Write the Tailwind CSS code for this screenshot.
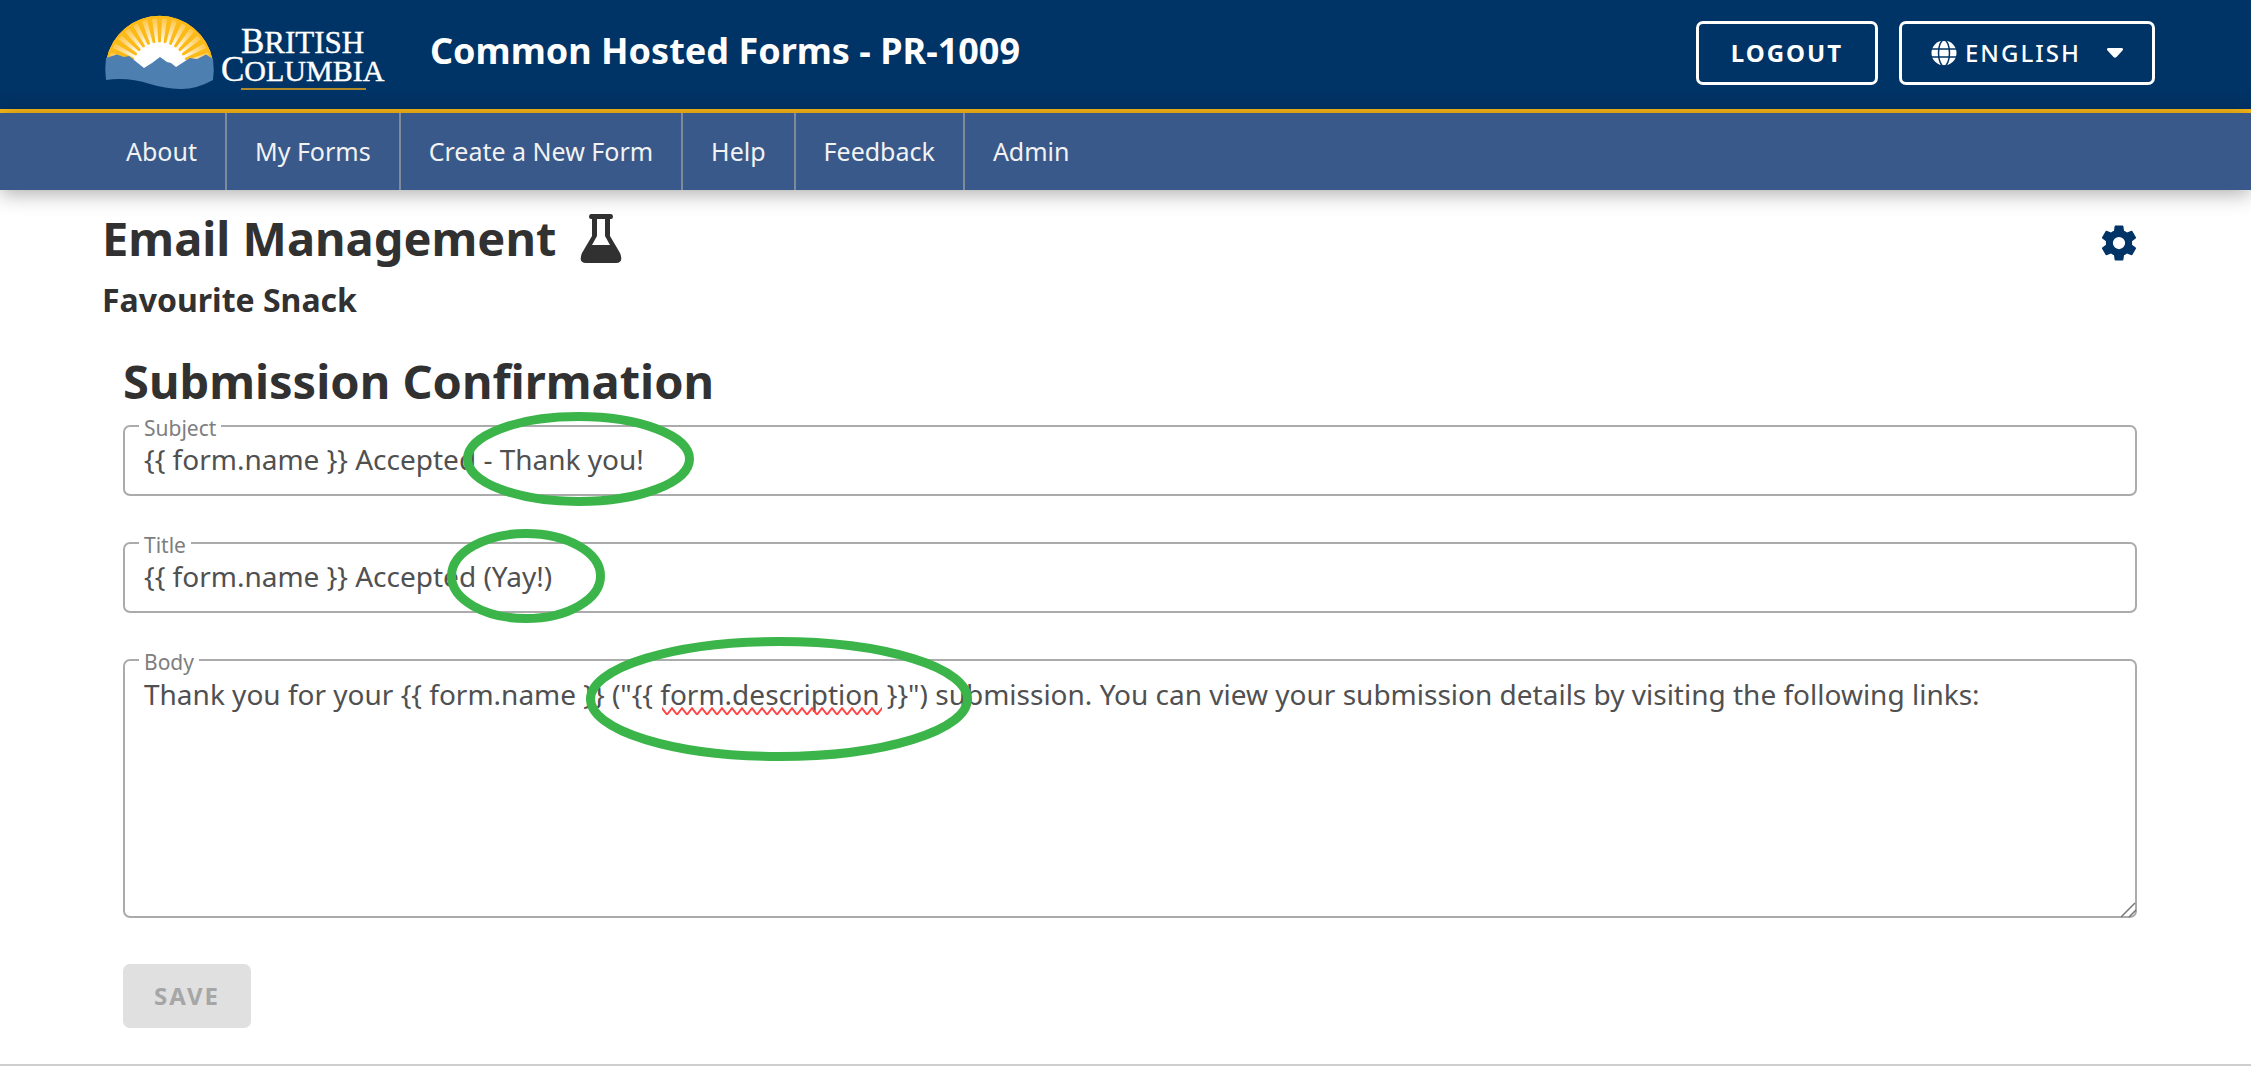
<!DOCTYPE html>
<html lang="en">
<head>
<meta charset="utf-8">
<title>Common Hosted Forms</title>
<script src="https://cdn.jsdelivr.net/npm/@tailwindcss/browser@4"></script>
</head>
<body class="min-h-screen flex flex-col bg-white font-['Noto_Sans',sans-serif] text-[#313132]">
<header class="flex items-center bg-[#003366] border-b-4 border-[#fcba19] h-[113px] pl-[104px] pr-24 pb-1">
  <a href="#" aria-label="British Columbia" class="shrink-0">
    <svg class="block w-[282px] h-[76px]" viewBox="104 15 282 76">
      <defs>
        <clipPath id="sun"><path d="M106.500 70V59.500A54 54 0 0 1 212.500 59.500V70Z"/></clipPath>
        <radialGradient id="glow" gradientUnits="userSpaceOnUse" cx="159.500" cy="70" r="54">
          <stop offset=".5" stop-color="#fff"/><stop offset=".7" stop-color="#fee3a6"/><stop offset="1" stop-color="#fdc23a"/>
        </radialGradient>
      </defs>
      <g clip-path="url(#sun)">
        <rect x="104" y="14" width="112" height="60" fill="url(#glow)"/>
        <g fill="none" stroke="#fcba19">
          <circle cx="159.500" cy="70" r="41" stroke-width="26" pathLength="64" stroke-dasharray="1 1" stroke-dashoffset=".5"/>
          <circle cx="159.500" cy="70" r="31" stroke-width="7" pathLength="64" stroke-dasharray=".6 1.400" stroke-dashoffset=".3"/>
          <circle cx="159.500" cy="70" r="53" stroke-width="3"/>
        </g>
      </g>
      <path fill="#4d80b1" d="M106 58L117 54.500 124 57 129 56 144 68 152 63 160 57 167 62 171 63 176 67 190 58 197 59 206 54.500 213 59Q214.500 70 213 80Q196 89.500 180 89Q165 88.500 150 84Q128 77 106 80Q104.500 69 106 58Z"/>
      <g fill="#fff" stroke="#fff" stroke-width=".4" font-family="Liberation Serif, serif">
        <text x="241" y="53" font-size="35">B<tspan font-size="31">RITISH</tspan></text>
        <text x="221" y="81" font-size="35">C<tspan font-size="30">OLUMBIA</tspan></text>
      </g>
      <rect x="241" y="88" width="125" height="2" fill="#b08a2a"/>
    </svg>
  </a>
  <h1 class="ml-11 pb-1 text-[36px] font-bold leading-none text-white whitespace-nowrap">Common Hosted Forms - PR-1009</h1>
  <div class="ml-auto flex gap-[21px]">
    <button class="h-16 px-8 rounded-[7px] border-[3px] border-white text-white text-2xl font-bold tracking-[2px]">LOGOUT</button>
    <button class="h-16 w-64 pl-[29px] pr-[29px] flex items-center rounded-[7px] border-[3px] border-white text-white text-2xl font-medium tracking-[2px]">
      <svg class="size-[26px] mr-2" viewBox="0 0 26 26"><circle cx="13" cy="13" r="12.500" fill="#fff"/><g fill="none" stroke="#003366" stroke-width="1.500"><ellipse cx="13" cy="13" rx="5.500" ry="13"/><path d="M0 9H26M0 17H26"/></g></svg>
      ENGLISH
      <svg class="ml-auto w-4 h-[10px]" viewBox="0 0 16 10"><path fill="#fff" d="M1 0H15Q17 1 15.500 2.500L9.500 9Q8 10.500 6.500 9L.5 2.500Q-1 1 1 0Z"/></svg>
    </button>
  </div>
</header>
<nav class="bg-[#38598a] px-[98px] shadow-[0_3px_20px_rgba(0,0,0,0.35)]">
  <ul class="flex text-[25px] leading-[77px] text-[#f2f2f2] whitespace-nowrap">
    <li class="border-r-2 border-[#7c8a9a]"><a href="#" class="block px-7">About</a></li>
    <li class="border-r-2 border-[#7c8a9a]"><a href="#" class="block px-7">My Forms</a></li>
    <li class="border-r-2 border-[#7c8a9a]"><a href="#" class="block px-7">Create a New Form</a></li>
    <li class="border-r-2 border-[#7c8a9a]"><a href="#" class="block px-7">Help</a></li>
    <li class="border-r-2 border-[#7c8a9a]"><a href="#" class="block px-7">Feedback</a></li>
    <li><a href="#" class="block px-7">Admin</a></li>
  </ul>
</nav>
<main class="grow pl-[102px] pr-[114px] pt-4">
  <div class="flex items-start justify-between">
    <h2 class="flex items-center text-[47px] font-bold leading-[64px] whitespace-nowrap">Email Management
      <svg class="ml-6 w-[42px] h-[49px]" viewBox="0 0 42 49"><path fill="#313132" fill-rule="evenodd" d="M11 0H31Q33 0 33 2.500T31 5H30V22L40 39Q44 49 36 49H6Q-2 49 2 39L12 22V5H11Q9 5 9 2.500T11 0ZM17 5V22L12 31H30L25 22V5Z"/></svg>
    </h2>
    <button aria-label="Manage form" class="mt-4 -mr-[3px]"><svg class="block w-[42px] h-[42px]" viewBox="0 0 24 24"><path fill="#003366" d="M12 15.500A3.500 3.500 0 0 1 8.500 12 3.500 3.500 0 0 1 12 8.500 3.500 3.500 0 0 1 15.500 12 3.500 3.500 0 0 1 12 15.500M19.430 12.970C19.470 12.650 19.500 12.330 19.500 12S19.470 11.340 19.430 11L21.540 9.370C21.730 9.220 21.780 8.950 21.660 8.730L19.660 5.270C19.540 5.050 19.270 4.960 19.050 5.050L16.560 6.050C16.040 5.660 15.500 5.320 14.870 5.070L14.500 2.420C14.460 2.180 14.250 2 14 2H10C9.750 2 9.540 2.180 9.500 2.420L9.130 5.070C8.500 5.320 7.960 5.660 7.440 6.050L4.950 5.050C4.730 4.960 4.460 5.050 4.340 5.270L2.340 8.730C2.210 8.950 2.270 9.220 2.460 9.370L4.570 11C4.530 11.340 4.500 11.670 4.500 12S4.530 12.650 4.570 12.970L2.460 14.630C2.270 14.780 2.210 15.050 2.340 15.270L4.340 18.730C4.460 18.950 4.730 19.030 4.950 18.950L7.440 17.940C7.960 18.340 8.500 18.680 9.130 18.930L9.500 21.580C9.540 21.820 9.750 22 10 22H14C14.250 22 14.460 21.820 14.500 21.580L14.870 18.930C15.500 18.670 16.040 18.340 16.560 17.940L19.050 18.950C19.270 19.030 19.540 18.950 19.660 18.730L21.660 15.270C21.780 15.050 21.730 14.780 21.540 14.630Z"/></svg></button>
  </div>
  <h3 class="text-[32px] font-bold leading-[60px]">Favourite Snack</h3>
  <form class="pl-[21px] pt-5">
    <h2 class="text-[47px] font-bold leading-[62px]">Submission Confirmation</h2>
    <div class="relative mt-[13px]">
      <label for="subject" class="absolute left-4 -top-[9px] px-[5px] bg-white text-[21px] leading-6 text-[#7e7e7f]">Subject</label>
      <input id="subject" value="{{ form.name }} Accepted - Thank you!" class="block w-full h-[71px] px-[19px] pb-[3px] rounded-[7px] border-2 border-[#ababab] text-[28px] text-[#505051]">
      <svg class="absolute left-[340px] -top-[13px] w-[231px] h-[94px]" viewBox="0 0 231 94"><ellipse cx="115.500" cy="47" rx="111" ry="42.500" fill="none" stroke="#3bb54a" stroke-width="9"/></svg>
    </div>
    <div class="relative mt-[46px]">
      <label for="title" class="absolute left-4 -top-[9px] px-[5px] bg-white text-[21px] leading-6 text-[#7e7e7f]">Title</label>
      <input id="title" value="{{ form.name }} Accepted (Yay!)" class="block w-full h-[71px] px-[19px] pb-[3px] rounded-[7px] border-2 border-[#ababab] text-[28px] text-[#505051]">
      <svg class="absolute left-[324px] -top-[13px] w-[158px] h-[94px]" viewBox="0 0 158 94"><ellipse cx="79" cy="47" rx="74.500" ry="42.500" fill="none" stroke="#3bb54a" stroke-width="9"/></svg>
    </div>
    <div class="relative mt-[46px]">
      <label for="body" class="absolute left-4 -top-[9px] px-[5px] bg-white text-[21px] leading-6 text-[#7e7e7f]">Body</label>
      <textarea id="body" spellcheck="false" class="block w-full h-[259px] px-[19px] py-[13px] rounded-[7px] border-2 border-[#ababab] text-[28px] leading-10 text-[#505051] resize-none">Thank you for your {{ form.name }} ("{{ form.description }}") submission. You can view your submission details by visiting the following links:</textarea>
      <svg class="absolute left-[539px] top-[48px] w-[220px] h-2" viewBox="0 0 220 8"><defs><pattern id="wave" width="10" height="8" patternUnits="userSpaceOnUse"><path d="M-1 0L5 7.500 11 0" fill="none" stroke="#f44" stroke-width="2"/></pattern></defs><rect width="220" height="8" fill="url(#wave)"/></svg>
      <svg class="absolute left-[463px] -top-[22px] w-[386px] h-[124px]" viewBox="0 0 386 124"><ellipse cx="193" cy="62" rx="188.500" ry="57.500" fill="none" stroke="#3bb54a" stroke-width="9"/></svg>
      <svg class="absolute right-0 bottom-0 size-4" viewBox="0 0 16 16"><path d="M0 15L14 1M8 15L15 8" stroke="#777" stroke-width="1.500"/></svg>
    </div>
    <button disabled class="mt-[46px] h-16 w-32 rounded-[7px] bg-[#e0e0e0] text-2xl font-bold tracking-[2px] text-[#a6a6a6]">SAVE</button>
  </form>
</main>
<footer class="h-[2px] bg-[#cfcfcf]"></footer>
</body>
</html>
